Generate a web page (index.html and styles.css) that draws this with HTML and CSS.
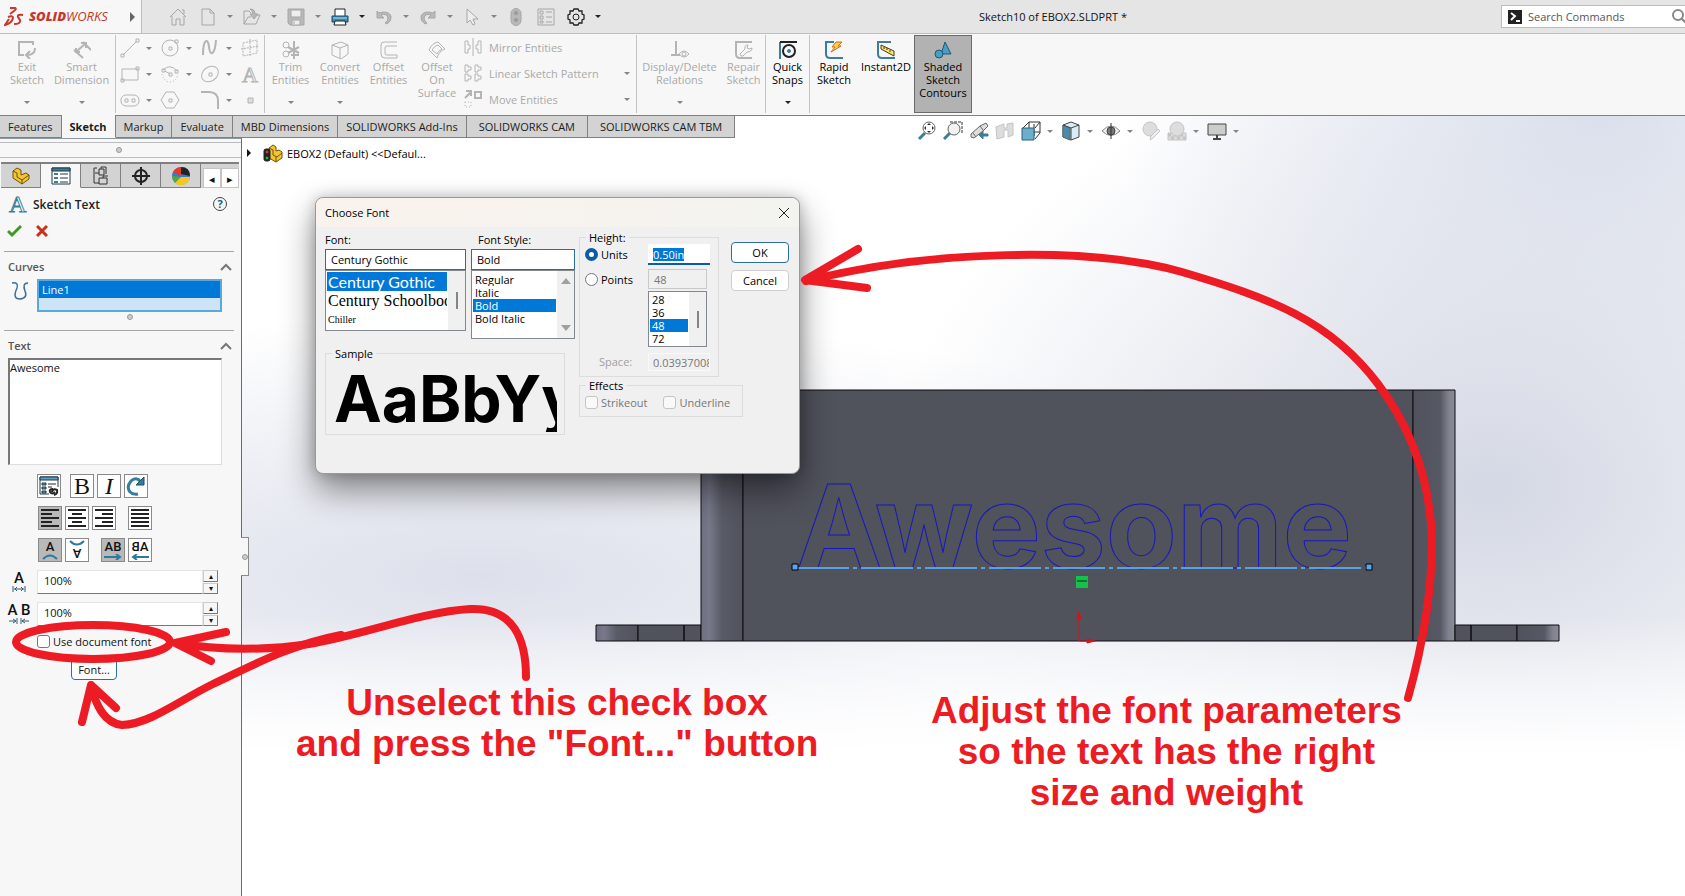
FILE: index.html
```html
<!DOCTYPE html>
<html lang="en">
<head>
    <meta charset="UTF-8">
    <meta name="viewport" content="width=device-width, initial-scale=1.0">
    <title>Sketch10 of EBOX2.SLDPRT *</title>
    <link rel="stylesheet" href="styles.css">
</head>
<body>
    <header class="titlebar">
        <div class="brand">
            <svg class="ds" width="20" height="20" viewBox="0 0 20 20"><path d="M6 1h5q2 1-1 3L6 7M4 10q5-2 5 1-1 5-8 7l4-6M19 8q-6-1-5 2l2 3q1 4-6 4"/></svg>
            <span class="brand-name"><b>SOLID</b>WORKS</span>
            <span class="play"></span>
        </div>
        <div class="quick">
            <button class="tool" aria-label="Home"><svg width="18" height="18" viewBox="0 0 18 18"><path d="M1 9l8-8 8 8M3 8v9h4v-6h4v6h4V8M13 2h2v4"/></svg></button>
            <button class="tool" aria-label="New"><svg width="18" height="18" viewBox="0 0 18 18"><path d="M3 1h8l4 4v12H3zM11 1v4h4"/></svg></button><span class="caret wide"></span>
            <button class="tool" aria-label="Open"><svg width="18" height="18" viewBox="0 0 18 18"><path d="M1 16V3h5l2 2M1 16h12l4-9h-3M1 16l4-7h3" /><path class="grey" d="M7 1q5 0 5 5h3l-4 5-4-5h3q0-3-3-5z"/></svg></button><span class="caret wide"></span>
            <button class="tool" aria-label="Save"><svg width="18" height="18" viewBox="0 0 18 18"><path class="grey" d="M1 1h16v16H3l-2-2z"/><path fill="#eee" d="M4 2h10v7H4zM5 12h8v5H5z"/><path d="M7 13v3"/></svg></button><span class="caret wide"></span>
            <button class="tool" aria-label="Print"><svg width="18" height="18" viewBox="0 0 18 18"><path style="stroke:#222;fill:#fff" d="M4 8V1h10v7"/><path style="stroke:#164b68;fill:#3a8cb4" d="M1 8h16v6H1z"/><path style="stroke:#222;fill:#fff" d="M4 13h10l1 4H3z"/><path style="stroke:#a8dcf4" d="M2 10h14"/></svg></button><span class="caret wide dark"></span>
            <button class="tool" aria-label="Undo"><svg width="18" height="18" viewBox="0 0 18 18"><path class="grey" d="M2 3v7h7L6 7q6-2 7 3 0 3-3 5l2 1q5-3 4-8Q13 2 4 5z"/></svg></button><span class="caret wide"></span>
            <button class="tool" aria-label="Redo"><svg width="18" height="18" viewBox="0 0 18 18"><path class="grey" d="M16 3v7H9l3-3q-6-2-7 3 0 3 3 5l-2 1q-5-3-4-8Q5 2 14 5z"/></svg></button><span class="caret wide"></span>
            <button class="tool" aria-label="Select"><svg width="18" height="18" viewBox="0 0 18 18"><path fill="#eee" d="M4 1v14l3-3 3 5 2-1-2-5h5z"/></svg></button><span class="caret wide"></span>
            <button class="tool" aria-label="Rebuild"><svg width="18" height="18" viewBox="0 0 18 18"><rect class="grey" x="4" y="0.500" width="10" height="17" rx="5"/><circle style="fill:#999" cx="9" cy="5" r="2"/><circle style="fill:#999" cx="9" cy="12" r="2"/></svg></button>
            <button class="tool" aria-label="File Properties"><svg width="18" height="18" viewBox="0 0 18 18"><path d="M1 1h16v16H1zM3 3h3v3H3zM3 8h3v3H3zM3 13h3v2H3zM9 4h6M9 9h6M9 14h6"/></svg></button>
            <button class="tool" aria-label="Options"><svg width="18" height="18" viewBox="0 0 18 18"><path style="stroke:#222;stroke-width:1.300" d="M7 1h4l1 2 3 0 0 3 2 1v4l-2 1 0 3-3 0-1 2H7l-1-2-3 0 0-3-2-1V7l2-1 0-3 3 0z"/><circle style="stroke:#222" cx="9" cy="9" r="3"/></svg></button><span class="caret wide dark"></span>
        </div>
        <h1 class="doc-title">Sketch10 of EBOX2.SLDPRT *</h1>
        <div class="search">
            <span class="prompt"><svg width="14" height="14" viewBox="0 0 14 14"><path d="M3 3l4 3-4 4M8 11h4"/></svg></span>
            <input type="text" aria-label="Search Commands" placeholder="Search Commands">
            <svg class="lens" width="16" height="16" viewBox="0 0 16 16"><circle cx="6" cy="6" r="5"/><path d="M9 9l6 6"/></svg>
        </div>
    </header>

    <nav class="ribbon">
        <div class="group">
            <button class="cmd w54" disabled><svg width="18" height="18" viewBox="0 0 18 18"><path d="M15 4V1H1v13h5M17 7q0 7-8 7M12 10l-4 4 4 4" stroke-width="2"/></svg><span>Exit<br>Sketch</span><i class="caret"></i></button>
            <button class="cmd w61" disabled><svg width="18" height="18" viewBox="0 0 18 18"><path d="M1 9l9 8M10 1l8 8M4 10l8-7M3 7v4h4M8 2h5v5" stroke-width="2"/></svg><span>Smart<br>Dimension</span><i class="caret"></i></button>
        </div>
        <div class="group shapes">
            <button disabled aria-label="Line"><svg width="20" height="20" viewBox="0 0 20 20"><path d="M3 17L17 3M1 16h3v3H1zM16 1h3v3h-3z"/></svg><i class="caret"></i></button>
            <button disabled aria-label="Circle"><svg width="20" height="20" viewBox="0 0 20 20"><circle cx="10" cy="10" r="8"/><path d="M9 9h3v3H9zM15 2h3v3h-3z"/></svg><i class="caret"></i></button>
            <button disabled aria-label="Spline"><svg width="20" height="20" viewBox="0 0 20 20"><path stroke-width="2" d="M3 17C3 1 8-1 9 9s6 8 7-7"/></svg><i class="caret"></i></button>
            <button disabled aria-label="Plane"><svg width="20" height="20" viewBox="0 0 20 20"><path stroke-dasharray="2 1" d="M3 5l14-3v13L3 18zM10 1v18M1 11l18-3"/></svg></button>
            <button disabled aria-label="Rectangle"><svg width="20" height="20" viewBox="0 0 20 20"><path d="M2 5h16v11H2zM1 15h3v3H1zM16 3h3v3h-3z"/></svg><i class="caret"></i></button>
            <button disabled aria-label="Arc"><svg width="20" height="20" viewBox="0 0 20 20"><path d="M3 6q7-7 14 1M2 5h3v3H2zM15 6h3v3h-3zM9 9h3v3H9zM5 7l5 3"/><path stroke-dasharray="1 2" d="M2 10q2 8 8 8t8-8"/></svg><i class="caret"></i></button>
            <button disabled aria-label="Ellipse"><svg width="20" height="20" viewBox="0 0 20 20"><ellipse cx="10" cy="10" rx="9" ry="7" transform="rotate(-35 10 10)"/><path d="M9 9h3v3H9z"/></svg><i class="caret"></i></button>
            <button class="glyph" disabled aria-label="Text">A</button>
            <button disabled aria-label="Slot"><svg width="20" height="20" viewBox="0 0 20 20"><rect x="1" y="5" width="18" height="11" rx="5"/><path d="M5 9h3v3H5zM12 9h3v3h-3z"/></svg><i class="caret"></i></button>
            <button disabled aria-label="Polygon"><svg width="20" height="20" viewBox="0 0 20 20"><path d="M6 2h8l5 8-5 8H6l-5-8zM9 9h3v3H9z"/></svg></button>
            <button disabled aria-label="Fillet"><svg width="20" height="20" viewBox="0 0 20 20"><path d="M1 2h8q9 0 9 9v8" stroke-width="2"/></svg><i class="caret"></i></button>
            <button disabled aria-label="Point"><svg width="20" height="20" viewBox="0 0 20 20"><path d="M8 8h5v5H8z" fill="#ddd"/></svg></button>
        </div>
        <div class="group">
            <button class="cmd w51" disabled><svg width="18" height="18" viewBox="0 0 18 18"><circle cx="4" cy="4" r="3"/><circle cx="4" cy="13" r="3"/><path d="M6 6l11 6M6 12l11-6M12 0v18M9 14h8" stroke-width="2"/></svg><span>Trim<br>Entities</span><i class="caret"></i></button>
            <button class="cmd w48" disabled><svg width="18" height="18" viewBox="0 0 18 18"><path d="M1 4l9-3 7 3v9l-7 5-9-4zM1 4l8 3 8-3M9 7v11"/></svg><span>Convert<br>Entities</span><i class="caret"></i></button>
            <button class="cmd w49" disabled><svg width="18" height="18" viewBox="0 0 18 18"><path d="M17 1H4q-3 0-3 3v9q0 4 4 4h12v-3H7q-2 0-2-2V7q0-2 2-2h10"/></svg><span>Offset<br>Entities</span></button>
            <button class="cmd w48" disabled><svg width="18" height="18" viewBox="0 0 18 18"><path d="M1 9q3-7 9-8l7 7q-6 2-8 9zM4 9q2-4 6-5l4 4q-4 2-5 5z"/></svg><span>Offset<br>On<br>Surface</span></button>
            <div class="lines">
                <button disabled><svg width="18" height="18" viewBox="0 0 18 18"><path d="M9 0v18M1 3h3v4h2v4H4v4H1zM17 3h-3v4h-2v4h2v4h3z"/></svg>Mirror Entities</button>
                <button disabled><svg width="18" height="18" viewBox="0 0 18 18"><path d="M1 1h3v2h3v3H4v2H1zM11 1h3v2h3v3h-3v2h-3zM1 10h3v2h3v3H4v2H1zM11 10h3v2h3v3h-3v2h-3z"/></svg>Linear Sketch Pattern<i class="caret"></i></button>
                <button disabled><svg width="18" height="18" viewBox="0 0 18 18"><path d="M1 8l6-6M2 1h5v5M11 2h6v6h-6z" stroke-width="2"/><path stroke-dasharray="1 2" d="M1 12h6v5H1z"/></svg>Move Entities<i class="caret"></i></button>
            </div>
        </div>
        <div class="group">
            <button class="cmd w85" disabled><svg width="18" height="18" viewBox="0 0 18 18"><path d="M5 0v14M0 14h9" stroke-width="2"/><path d="M8 13q5-6 10 0-5 6-10 0"/><circle cx="13" cy="13" r="2"/></svg><span>Display/Delete<br>Relations</span><i class="caret"></i></button>
            <button class="cmd w43" disabled><svg width="18" height="18" viewBox="0 0 18 18"><path d="M17 1H1v12q0 4 4 4h12" stroke-width="2"/><path d="M6 15l-1-2 5-5q-1-4 3-4l-1 3 2 1 3-1q0 4-5 4l-4 4z"/></svg><span>Repair<br>Sketch</span></button>
        </div>
        <div class="group">
            <button class="cmd w43"><svg width="18" height="18" viewBox="0 0 18 18"><path stroke="#3b7d9c" stroke-width="2" d="M1 18V1"/><path stroke="#222" stroke-width="2" d="M1 1h17"/><circle cx="10" cy="10" r="6" stroke="#222" stroke-width="2"/><circle cx="10" cy="10" r="1.500" fill="#3b7d9c" stroke="#3b7d9c"/></svg><span>Quick<br>Snaps</span><i class="caret dark"></i></button>
        </div>
        <div class="group last">
            <button class="cmd w48"><svg width="18" height="18" viewBox="0 0 18 18"><path stroke="#3b7d9c" stroke-width="2" d="M9 1H1v12q0 4 4 4h13"/><path fill="#ffd23c" stroke="#d26a20" d="M11 1h6l-4 4h3L6 11l4-5H7z"/></svg><span>Rapid<br>Sketch</span></button>
            <button class="cmd w56"><svg width="18" height="18" viewBox="0 0 18 18"><path stroke="#3b7d9c" stroke-width="2" d="M14 1H1v12q0 4 4 4h13"/><path fill="#ffe06a" stroke="#443c20" d="M4 4l13 6v5L4 8zM7 6v2M10 7v2M13 9v2"/></svg><span>Instant2D</span></button>
            <button class="cmd w58 pressed"><svg width="18" height="18" viewBox="0 0 18 18"><path fill="#4d9dc0" stroke="#1c5877" d="M11 1l6 12H7z"/><circle fill="#4d9dc0" stroke="#1c5877" cx="5" cy="13" r="4"/></svg><span>Shaded<br>Sketch<br>Contours</span></button>
        </div>
    </nav>

    <main class="workspace">
        <div class="tab-row">
            <div class="tabs">
                <a href="#features">Features</a>
                <a href="#sketch" class="active">Sketch</a>
                <a href="#markup">Markup</a>
                <a href="#evaluate">Evaluate</a>
                <a href="#mbd">MBD Dimensions</a>
                <a href="#addins">SOLIDWORKS Add-Ins</a>
                <a href="#cam" class="cam">SOLIDWORKS CAM</a>
                <a href="#tbm" class="cam">SOLIDWORKS CAM TBM</a>
            </div>
            <div class="headsup">
                <svg width="20" height="20" viewBox="0 0 20 20"><path d="M8 12l-6 6" stroke="#3b7d9c" stroke-width="3"/><circle cx="12" cy="7" r="6" fill="#fff"/><path fill="#333" d="M12 2l2 2h-4zM12 12l2-2h-4zM7 7l2-2v4zM17 7l-2-2v4z" stroke="none"/></svg>
                <svg width="20" height="20" viewBox="0 0 20 20"><path stroke-dasharray="3 1" stroke="#333" d="M7 1h12v12"/><path d="M7 12l-6 6" stroke="#3b7d9c" stroke-width="3"/><circle cx="11" cy="8" r="6" fill="#f2f2f2"/></svg>
                <svg width="20" height="20" viewBox="0 0 20 20"><path fill="#ddd" d="M2 13l9-8 6-3 2 3-5 5-9 7-3-1zM11 5l3 4M4 12l3 4"/><path stroke="#3b7d9c" fill="#3b7d9c" d="M10 14l4-4v3h5v2h-5v3z"/></svg>
                <svg class="off" width="20" height="20" viewBox="0 0 20 20"><path fill="#ddd" d="M1 6l8-3v4h3V3l6-1v12l-5 2V9H9v7l-7 2z"/></svg>
                <svg width="20" height="20" viewBox="0 0 20 20"><path stroke="#333" d="M2 7l6-6h11v11l-5 6M8 1v6M13 3v12M8 11h11M14 7l5-6"/><path fill="#6aaecb" stroke="#28637f" d="M1 7h12v12H1z"/></svg><i class="caret"></i>
                <svg width="20" height="20" viewBox="0 0 20 20"><path fill="#d8edf5" stroke="#444" d="M2 4l8-3 8 3v12l-8 3-8-3z"/><path fill="#458dac" d="M2 4l7 3v12l-7-3z"/><path stroke="#444" d="M2 4l8 3 8-3M10 7v12"/></svg><i class="caret"></i>
                <svg width="20" height="20" viewBox="0 0 20 20"><path fill="#eee" stroke="#888" d="M1 10q9-10 18 0-9 9-18 0"/><circle cx="10" cy="10" r="4" fill="#777" stroke="#444"/><path stroke="#333" d="M10 2v16"/></svg><i class="caret"></i>
                <svg class="off" width="20" height="20" viewBox="0 0 20 20"><circle cx="9" cy="8" r="7" fill="#ddd"/><path fill="#eee" d="M9 19l1-4 7-7 2 2-7 7z"/></svg>
                <svg class="off" width="20" height="20" viewBox="0 0 20 20"><path fill="#ddd" d="M1 12h18v7H1z"/><path stroke-dasharray="3 3" stroke-width="3" d="M1 14h18M4 17h15"/><circle cx="10" cy="8" r="7" fill="#ddd"/></svg><i class="caret"></i>
                <svg width="20" height="20" viewBox="0 0 20 20"><path fill="#ccc" stroke="#444" d="M1 3h18v11H1z"/><path stroke="#444" stroke-width="2" d="M10 14v4M6 18h8"/></svg><i class="caret"></i>
            </div>
        </div>

        <div class="body-row">
            <aside class="panel">
                <div class="grip"><span class="dot"></span></div>
                <div class="panel-tabs">
                    <button aria-label="FeatureManager"><svg width="20" height="20" viewBox="0 0 20 20"><path fill="#f5c431" stroke="#6d5210" d="M2 5l4-3 4 2v5l5-2 3 2v4l-7 5-9-6z"/><path stroke="#6d5210" d="M2 5l4 2v4l5 3 7-5M11 14v4"/></svg></button>
                    <button class="active" aria-label="PropertyManager"><svg width="20" height="20" viewBox="0 0 20 20"><path stroke="#223944" fill="#fff" d="M1 2h18v16H1z"/><path fill="#3b7d9c" stroke="#223944" d="M1 2h18v3H1z"/><path stroke="#3b7d9c" stroke-width="2" d="M3 8h4M3 12h4M3 16h4"/><path stroke="#223944" d="M9 8h8M9 12h8M9 16h8"/></svg></button>
                    <button aria-label="ConfigurationManager"><svg width="20" height="20" viewBox="0 0 20 20"><path stroke="#333" d="M6 2H3v15h5M4 7h4M8 3h5v6H8zM8 12h8v6H8zM10 3V1h5v7M12 12v-2h5"/></svg></button>
                    <button aria-label="DimXpertManager"><svg width="20" height="20" viewBox="0 0 20 20"><circle cx="10" cy="10" r="6" stroke="#222" stroke-width="2"/><path stroke="#222" stroke-width="2" d="M10 1v18M1 10h18"/></svg></button>
                    <button aria-label="DisplayManager"><svg width="20" height="20" viewBox="0 0 20 20"><g stroke="none"><circle cx="10" cy="10" r="9" fill="#3c78d0"/><path fill="#e33b2d" d="M10 10L2 6q3-5 9-5z"/><path fill="#57a83c" d="M10 11L4 17q-3-3-3-7z"/><path fill="#f3c822" d="M10 11l-6 6q3 3 8 2 6-2 7-8z"/><path fill="#222" d="M10 1q9 0 9 9l-9-2z"/></g></svg></button>
                    <div class="scroller"><button aria-label="Previous tab">◂</button><button aria-label="Next tab">▸</button></div>
                </div>
                <div class="pm-head">
                    <span class="letter">A</span>
                    <h2>Sketch Text</h2>
                    <button class="help" aria-label="Help">?</button>
                </div>
                <div class="confirm">
                    <button aria-label="OK"><svg width="15" height="14" viewBox="0 0 15 14"><path stroke="#3f9a22" stroke-width="3" d="M1 7l4 4 9-9"/></svg></button>
                    <button aria-label="Cancel"><svg width="12" height="12" viewBox="0 0 12 12"><path stroke="#c8301a" stroke-width="3" d="M1 1l10 10M11 1L1 11"/></svg></button>
                </div>
                <section class="curves">
                    <h3>Curves<svg width="12" height="8" viewBox="0 0 12 8"><path d="M1 7l5-5 5 5"/></svg></h3>
                    <div class="selection">
                        <svg width="18" height="20" viewBox="0 0 18 20"><path stroke="#3b6f96" stroke-width="1.500" d="M1 2q7-1 5 5-5 11 3 11 8-1 5-8-3-8 3-8"/></svg>
                        <ul><li>Line1</li></ul>
                    </div>
                    <span class="dot"></span>
                </section>
                <section class="textbox">
                    <h3><label for="sketch-text">Text</label><svg width="12" height="8" viewBox="0 0 12 8"><path d="M1 7l5-5 5 5"/></svg></h3>
                    <textarea id="sketch-text">Awesome</textarea>
                    <div class="format first">
                        <button aria-label="Link to Property"><svg width="20" height="20" viewBox="0 0 20 20"><path stroke="#223944" d="M10 18H1V1h18v10"/><path fill="#5da3c2" stroke="#223944" d="M1 1h18v3H1z"/><path fill="#5da3c2" stroke="#223944" d="M3 7h4v2H3zM3 11h4v2H3zM3 15h4v2H3z"/><path stroke="#222" d="M9 8h8M9 11h4"/><path stroke="#222" stroke-width="2" d="M14 13q-4 0-3 3 2 3 5 0M13 16q1-4 5-2 1 4-3 5"/></svg></button>
                        <span class="spacer"></span>
                        <button class="serif">B</button>
                        <button class="serif"><i>I</i></button>
                        <button aria-label="Rotate"><svg width="20" height="20" viewBox="0 0 20 20"><path stroke="#357f9e" stroke-width="3" d="M15 6q-5-6-10-1-5 6-1 11 3 3 8 2"/><path fill="#357f9e" stroke="#1f4d63" d="M18 1v8h-8z"/></svg></button>
                    </div>
                    <div class="format">
                        <button class="on" aria-label="Left Align"><svg width="20" height="20" viewBox="0 0 20 20"><path class="bars" d="M1 2h18M1 6h11M1 10h18M1 14h11M1 18h18"/></svg></button>
                        <button aria-label="Center Align"><svg width="20" height="20" viewBox="0 0 20 20"><path class="bars" d="M1 2h18M5 6h10M1 10h18M5 14h10M1 18h18"/></svg></button>
                        <button aria-label="Right Align"><svg width="20" height="20" viewBox="0 0 20 20"><path class="bars" d="M1 2h18M8 6h11M1 10h18M8 14h11M1 18h18"/></svg></button>
                        <span class="spacer"></span>
                        <button aria-label="Full Justify"><svg width="20" height="20" viewBox="0 0 20 20"><path class="bars" d="M1 2h18M1 6h18M1 10h18M1 14h18M1 18h18"/></svg></button>
                    </div>
                    <div class="format">
                        <button class="on over">A<svg width="16" height="6" viewBox="0 0 16 6"><path d="M1 5q7-7 14 0"/></svg></button>
                        <button class="over flip-v">A<svg width="16" height="6" viewBox="0 0 16 6"><path d="M1 5q7-7 14 0"/></svg></button>
                        <span class="spacer"></span>
                        <button class="on over">AB<svg width="18" height="6" viewBox="0 0 18 6"><path d="M0 3h16M12 0l4 3-4 3"/></svg></button>
                        <button class="over flip-h">AB<svg width="18" height="6" viewBox="0 0 18 6"><path d="M0 3h16M12 0l4 3-4 3"/></svg></button>
                    </div>
                    <div class="spin">
                        <label for="width-factor">A<svg width="14" height="6" viewBox="0 0 14 6"><path d="M1 0v6M13 0v6M2 3h10M5 1L3 3l2 2M9 1l2 2-2 2"/></svg></label>
                        <input id="width-factor" type="text" value="100%">
                        <div class="steps"><button aria-label="Increase width">▴</button><button aria-label="Decrease width">▾</button></div>
                    </div>
                    <div class="spin">
                        <label for="spacing">A B<svg width="20" height="6" viewBox="0 0 20 6"><path d="M0 3h7M8 0v6M12 0v6M13 3h7M4 1l3 2-3 2M16 1l-3 2 3 2"/></svg></label>
                        <input id="spacing" type="text" value="100%">
                        <div class="steps"><button aria-label="Increase spacing">▴</button><button aria-label="Decrease spacing">▾</button></div>
                    </div>
                    <label class="check"><input type="checkbox">Use document font</label>
                    <button class="font-btn">Font...</button>
                </section>
                <div class="handle"><span class="dot"></span></div>
            </aside>

            <div class="viewport">
                <div class="tree">
                    <span class="play small"></span>
                    <svg width="20" height="20" viewBox="0 0 20 20"><path fill="#f5c431" stroke="#6d5210" d="M6 5l4-3 3 2v4l3-1 3 2v6l-6 4-7-4z"/><path stroke="#6d5210" d="M6 5l4 2v5l4 2 5-4M13 14v5"/><rect x="1" y="6" width="6" height="12" rx="2" fill="#222" stroke="#222"/><circle cx="4" cy="9" r="1" stroke="#e33" fill="#e33"/><circle cx="4" cy="15" r="1" stroke="#3b3" fill="#3b3"/></svg>
                    <span>EBOX2 (Default) &lt;&lt;Defaul...</span>
                </div>
                <svg class="model" viewBox="242 138 1443 758" preserveAspectRatio="xMinYMin meet">
                    <defs>
                        <linearGradient id="left-side"><stop offset="0" stop-color="#6e7080"/><stop offset=".2" stop-color="#77798a"/><stop offset=".5" stop-color="#595b67"/><stop offset="1" stop-color="#50525c"/></linearGradient>
                        <linearGradient id="right-side"><stop offset="0" stop-color="#50525c"/><stop offset=".65" stop-color="#565864"/><stop offset=".85" stop-color="#80828f"/><stop offset="1" stop-color="#8a8c98"/></linearGradient>
                    </defs>
                    <g class="solid">
                        <path fill="url(#left-side)" d="M596 625h42v16h-42z"/>
                        <path d="M638 625h46v16h-46zM684 625h17v16h-17z"/>
                        <path fill="url(#left-side)" d="M701 390h42v251h-42z"/>
                        <path d="M743 390h670v251H743z"/>
                        <path fill="url(#right-side)" d="M1413 390h42v251h-42z"/>
                        <path d="M1455 625h16v16h-16zM1471 625h46v16h-46z"/>
                        <path fill="url(#right-side)" d="M1517 625h42v16h-42z"/>
                    </g>
                    <text class="outline" x="796" y="568">Awesome</text>
                    <path class="construction" d="M797 568h572"/>
                    <path class="point" d="M792 564h6v6h-6zM1366 564h6v6h-6z"/>
                    <path fill="#12c24a" stroke="none" d="M1076 576h12v12h-12z"/>
                    <path stroke="#123" d="M1077 581h10"/>
                    <path class="origin" d="M1079 641v-24M1079 641h10M1079 611l-2 8h4zM1095 641l-8-2v4z"/>
                </svg>
                <p class="note note-left">Unselect this check box<br>and press the "Font..." button</p>
                <p class="note note-right">Adjust the font parameters<br>so the text has the right<br>size and weight</p>
            </div>
        </div>
    </main>

    <div class="dialog" role="dialog" aria-labelledby="dlg-title">
        <div class="dlg-title">
            <h2 id="dlg-title">Choose Font</h2>
            <button aria-label="Close"><svg width="12" height="12" viewBox="0 0 12 12"><path d="M1 1l10 10M11 1L1 11"/></svg></button>
        </div>
        <div class="dlg-body">
            <div class="dlg-left">
                <div class="pickers">
                    <div class="picker">
                        <label for="font-name">Font:</label>
                        <input id="font-name" type="text" value="Century Gothic">
                        <div class="list fonts">
                            <ul><li class="sel gothic">Century Gothic</li><li class="school">Century Schoolbook</li><li class="chiller">Chiller</li></ul>
                            <div class="bar"><span class="thumb"></span></div>
                        </div>
                    </div>
                    <div class="picker style-picker">
                        <label for="font-style">Font Style:</label>
                        <input id="font-style" type="text" value="Bold">
                        <div class="list styles">
                            <ul><li>Regular</li><li>Italic</li><li class="sel">Bold</li><li>Bold Italic</li></ul>
                            <div class="bar arrows"><span class="up"></span><span class="down"></span></div>
                        </div>
                    </div>
                </div>
                <fieldset class="sample"><legend>Sample</legend><div>AaBbYy</div></fieldset>
            </div>
            <div class="dlg-right">
                <div class="dlg-top">
                    <fieldset class="height">
                        <legend>Height:</legend>
                        <label><input type="radio" name="unit" checked>Units</label>
                        <div class="units"><input type="text" aria-label="Units" value="0.50in" size="6"><mark>0.50in</mark></div>
                        <label><input type="radio" name="unit">Points</label>
                        <input class="points" type="text" aria-label="Points" value="48" disabled>
                        <div class="list sizes">
                            <ul><li>28</li><li>36</li><li class="sel">48</li><li>72</li></ul>
                            <div class="bar"><span class="thumb"></span></div>
                        </div>
                        <label class="space-label" for="space">Space:</label>
                        <input class="space" id="space" type="text" value="0.03937008" disabled>
                    </fieldset>
                    <div class="dlg-buttons">
                        <button class="default">OK</button>
                        <button>Cancel</button>
                    </div>
                </div>
                <fieldset class="effects">
                    <legend>Effects</legend>
                    <label><input type="checkbox" disabled>Strikeout</label>
                    <label><input type="checkbox" disabled>Underline</label>
                </fieldset>
            </div>
        </div>
    </div>

    <svg class="markup" viewBox="0 0 1685 896" preserveAspectRatio="xMinYMin meet">
        <ellipse cx="93" cy="642" rx="77" ry="17"/>
        <path d="M526 677C526 640 514 607 470 609C420 612 360 636 309 644C270 650 220 651 176 643M226 632L175 643L211 661"/>
        <path d="M341 635C290 645 255 664 213 684C180 700 150 724 122 725C104 723 96 705 91 686M82 722L91 685L116 708"/>
        <path d="M1408 698C1420 655 1432 600 1432 540C1430 475 1408 424 1378 384C1330 320 1270 298 1182 272C1090 246 930 250 806 281M858 249L805 280L867 288"/>
    </svg>
</body>
</html>
```

FILE: styles.css
```css
* {
    box-sizing: border-box;
}

body {
    margin: 0;
    min-height: 100vh;
    display: flex;
    flex-direction: column;
    position: relative;
    overflow: hidden;
    font-family: "Open Sans", "Noto Sans", sans-serif;
    font-size: 11px;
    line-height: 13px;
    color: #111;
    background-color: #fff;
}

button, input, textarea {
    font: inherit;
    color: inherit;
    margin: 0;
    padding: 0;
    border: none;
    background: none;
}

h1, h2, h3, p, ul, fieldset {
    margin: 0;
    padding: 0;
    font-size: inherit;
    font-weight: normal;
}

ul {
    list-style: none;
}

svg {
    fill: none;
    stroke: #b4b4b4;
    flex: none;
    display: block;
}

/* little drop-down triangle */
.caret {
    width: 0;
    height: 0;
    border: 3px solid transparent;
    border-top: 3px solid #858585;
    border-bottom: none;
}

.caret.dark {
    border-top-color: #222;
}

.caret.wide {
    margin: 0 4px;
}

.dot {
    width: 6px;
    height: 6px;
    border: 1px solid #999;
    border-radius: 50%;
    background-color: #ccc;
}

.play {
    border: 5px solid transparent;
    border-left: 5px solid #666;
    border-right: none;
}

.play.small {
    border-width: 4px;
    border-right: none;
    border-left-color: #111;
}

/* title bar */
.titlebar {
    display: flex;
    align-items: center;
    height: 34px;
    background-color: #e5e5e5;
    border-bottom: 1px solid #bdbdbd;
}

.brand {
    display: flex;
    align-items: center;
    width: 142px;
    height: 33px;
    padding: 0 6px 0 4px;
    background-color: #f7f7f7;
    border-right: 1px solid #bdbdbd;
    color: #c8372c;
}

.ds {
    stroke: #c8372c;
    stroke-width: 2;
}

.brand-name {
    flex: 1;
    padding-left: 5px;
    font-family: "Open Sans", sans-serif;
    font-size: 13px;
    font-style: italic;
}

.brand-name b {
    font-weight: 800;
}

.quick {
    display: flex;
    align-items: center;
    padding-left: 21px;
}

.tool {
    width: 30px;
    display: flex;
    justify-content: center;
}

.tool svg {
    stroke: #a6a6a6;
}

.grey {
    fill: #b9b9b9;
}

.doc-title {
    flex: 1;
    text-align: center;
}

.search {
    display: flex;
    align-items: center;
    width: 184px;
    height: 23px;
    padding-left: 6px;
    background-color: #fff;
    border: 1px solid #bdbdbd;
    border-right: none;
    overflow: hidden;
}

.search input {
    flex: 1;
    min-width: 0;
    padding-left: 6px;
}

.search input::placeholder {
    color: #555;
    opacity: 1;
}

.prompt {
    background-color: #222;
}

.prompt svg {
    stroke: #fff;
    stroke-width: 2;
}

.lens {
    stroke: #888;
    stroke-width: 2;
    margin-right: -3px;
}

/* ribbon */
.ribbon {
    display: flex;
    height: 82px;
    padding-top: 1px;
    background-color: #f7f7f7;
    border-bottom: 1px solid #808080;
}

.group {
    display: flex;
    height: 78px;
    border-right: 1px solid #c4c4c4;
}

.group.last {
    border: none;
}

.cmd {
    display: flex;
    flex-direction: column;
    align-items: center;
    height: 78px;
    padding-top: 6px;
    color: #000;
    white-space: nowrap;
}

.cmd span {
    padding-top: 1px;
}

.cmd .caret {
    margin-top: auto;
    margin-bottom: 9px;
}

.ribbon button:disabled {
    color: #a9a9a9;
}

.w43 { width: 43px; }
.w48 { width: 48px; }
.w49 { width: 49px; }
.w51 { width: 51px; }
.w54 { width: 54px; }
.w56 { width: 56px; }
.w58 { width: 58px; }
.w85 { width: 85px; }

.w61 {
    width: 61px;
    padding-right: 6px;
}

.pressed {
    background-color: #b2b2b2;
    border: 1px solid #6b6b6b;
    padding-top: 5px;
}

.shapes {
    display: grid;
    grid-template-columns: 40px 40px 40px 28px;
    grid-template-rows: 26px 26px 26px;
}

.shapes button {
    display: flex;
    align-items: center;
    padding-left: 4px;
}

.shapes .caret {
    margin-left: 6px;
}

.shapes .glyph {
    padding-left: 6px;
    font-family: "Liberation Serif", serif;
    font-size: 22px;
    color: #f7f7f7;
    -webkit-text-stroke: 1px #b4b4b4;
}

.shapes .glyph:disabled {
    color: #f7f7f7;
}

.lines {
    width: 175px;
    display: flex;
    flex-direction: column;
    margin-top: -1px;
}

.lines button {
    display: flex;
    align-items: center;
    height: 26px;
    padding: 0 6px 0 3px;
    white-space: nowrap;
}

.lines svg {
    margin-right: 7px;
}

.lines .caret {
    margin-left: auto;
}

/* workspace */
.workspace {
    flex: 1;
    display: flex;
    flex-direction: column;
    background:
        linear-gradient(to bottom, rgba(255, 255, 255, 0) 64%, #fff 82%),
        radial-gradient(ellipse 600px 440px at 1490px 370px, #d4d8e4, rgba(212, 216, 228, 0)),
        radial-gradient(ellipse 480px 320px at 1600px 0, #dce1ed, rgba(220, 225, 237, 0)),
        radial-gradient(ellipse 900px 260px at 480px 460px, #dde0eb, rgba(221, 224, 235, 0)),
        #fff;
}

.tab-row {
    display: flex;
    height: 22px;
}

.tabs {
    display: flex;
    height: 22px;
}

.tabs a {
    padding: 4px 8px;
    border: 1px solid #808080;
    border-left: none;
    border-top: none;
    background-color: #d3d3d3;
    color: #1c1c1c;
    text-decoration: none;
    white-space: nowrap;
}

.tabs .active {
    margin-top: -1px;
    padding-top: 5px;
    background-color: #f7f7f7;
    border-bottom-color: #f7f7f7;
    font-weight: bold;
}

.tabs .cam {
    padding: 4px 12px;
}

.headsup {
    display: flex;
    align-items: center;
    gap: 6px;
    height: 30px;
    margin-left: 182px;
}

.headsup svg {
    stroke: #666;
}

.headsup .off {
    stroke: #c4c4c4;
}

.headsup .caret {
    margin-right: 2px;
}

.body-row {
    flex: 1;
    display: flex;
}

.panel {
    position: relative;
    width: 242px;
    background-color: #f7f7f7;
    border-right: 1px solid #6b6b6b;
    border-top: 1px solid #8c9aa0;
    padding-top: 3px;
}

.grip {
    display: flex;
    align-items: center;
    justify-content: center;
    height: 16px;
    padding-right: 3px;
    border-top: 1px solid #bdbdbd;
    border-bottom: 1px solid #bdbdbd;
}

.panel-tabs {
    display: flex;
    height: 26px;
    margin: 4px 2px 0 1px;
    border-top: 2px solid #808080;
}

.panel-tabs > button {
    display: flex;
    align-items: center;
    justify-content: center;
    width: 40px;
    background-color: #d3d3d3;
    border-right: 1px solid #808080;
    border-bottom: 1px solid #808080;
}

.panel-tabs > .active {
    background-color: #f7f7f7;
    border-bottom-color: #f7f7f7;
}

.scroller {
    display: flex;
    flex: 1;
    padding: 4px 0 0 2px;
    background-color: #d3d3d3;
}

.scroller button {
    flex: 1;
    background-color: #fff;
    border: 1px solid #c4c4c4;
}

.pm-head {
    display: flex;
    align-items: center;
    height: 32px;
    padding: 0 14px 0 9px;
}

.letter {
    width: 24px;
    font-family: "Liberation Serif", serif;
    font-size: 24px;
    line-height: 24px;
    color: #fff;
    -webkit-text-stroke: 1px #3b7d9c;
}

.pm-head h2 {
    flex: 1;
    font-size: 12px;
    font-weight: 600;
    color: #222;
}

.help {
    width: 14px;
    height: 14px;
    border: 1px solid #444;
    border-radius: 50%;
    color: #205a88;
    font-weight: bold;
    line-height: 12px;
}

.confirm {
    display: flex;
    align-items: center;
    gap: 14px;
    height: 22px;
    padding-left: 7px;
}

.panel section {
    margin: 9px 7px 0 4px;
    border-top: 1px solid #a6a6a6;
}

.curves {
    height: 69px;
}

.panel .textbox {
    margin-top: 10px;
}

.panel h3 {
    display: flex;
    align-items: center;
    justify-content: space-between;
    height: 27px;
    padding: 2px 2px 0 4px;
    font-weight: 600;
    color: #555;
}

.panel h3 svg {
    stroke: #777;
    stroke-width: 2;
}

.selection {
    display: flex;
    gap: 8px;
    padding: 0 12px 0 7px;
}

.selection svg {
    margin-top: 2px;
}

.selection ul {
    flex: 1;
    height: 33px;
    border: 2px solid #5aa9dc;
    background-color: #cde4f7;
}

.selection li {
    height: 17px;
    padding: 2px 3px;
    background-color: #0078d7;
    color: #fff;
}

.curves .dot {
    display: block;
    margin: 2px 0 0 123px;
}

textarea {
    display: block;
    width: 214px;
    height: 107px;
    margin-left: 4px;
    padding: 1px 0;
    background-color: #fff;
    border: 1px solid #ddd;
    border-top: 2px solid #777;
    border-left: 2px solid #777;
    resize: none;
}

.format {
    display: flex;
    gap: 3px;
    height: 24px;
    margin: 8px 0 0 34px;
}

.format.first {
    margin: 9px 0 0 33px;
}

.format button {
    display: flex;
    align-items: center;
    justify-content: center;
    width: 24px;
    height: 24px;
    background-color: #fff;
    border: 1px solid #8a8a8a;
}

.format .on {
    background-color: #b9b9b9;
}

.format .serif {
    font-family: "Liberation Serif", serif;
    font-size: 24px;
}

.format .over {
    flex-direction: column;
    font-family: Roboto, sans-serif;
    font-size: 13px;
    font-weight: 500;
    line-height: 14px;
}

.over svg {
    stroke: #2f7a9c;
    stroke-width: 2;
}

.flip-v {
    transform: scaleY(-1);
}

.flip-h {
    transform: scaleX(-1);
}

.spacer {
    width: 6px;
}

.first .spacer {
    width: 3px;
}

.bars {
    stroke: #222;
    stroke-width: 2;
}

.spin {
    display: flex;
    height: 24px;
    margin: 8px 16px 0 4px;
}

.spin label {
    display: flex;
    flex-direction: column;
    align-items: center;
    width: 29px;
    padding: 2px 7px 0 0;
    font-family: Roboto, sans-serif;
    font-size: 15px;
    font-weight: 500;
    white-space: nowrap;
}

.spin label svg {
    margin-top: 1px;
    stroke: #2f5f7a;
}

.spin input {
    flex: 1;
    min-width: 0;
    padding: 0 6px 3px;
    background-color: #fff;
    border: 1px solid #e5e5e5;
    border-bottom: 1px solid #777;
}

.steps {
    width: 15px;
    display: flex;
    flex-direction: column;
    gap: 1px;
}

.steps button {
    flex: 1;
    font-size: 8px;
    line-height: 8px;
    border: 1px solid #ccc;
    border-right-color: #777;
    border-bottom-color: #777;
}

.check {
    display: flex;
    align-items: center;
    gap: 3px;
    height: 13px;
    margin: 9px 0 0 33px;
}

input[type="checkbox"], input[type="radio"] {
    appearance: none;
    width: 13px;
    height: 13px;
    background-color: #fff;
    border: 1px solid #777;
    border-radius: 3px;
}

input[type="radio"] {
    border-radius: 50%;
}

input[type="radio"]:checked {
    border: 4px solid #0a5ca8;
}

input[type="checkbox"]:disabled {
    border-color: #c4c4c4;
    background-color: #f9f9f9;
}

.font-btn {
    width: 46px;
    height: 22px;
    margin: 10px 0 0 67px;
    background-color: #fff;
    border: 1px solid #2a6fa0;
    border-radius: 4px;
}

.handle {
    position: absolute;
    top: 398px;
    right: -8px;
    display: flex;
    align-items: center;
    justify-content: flex-end;
    width: 8px;
    height: 39px;
    background-color: #f7f7f7;
    border: 1px solid #8a8a8a;
    border-left: none;
}

/* graphics area */
.viewport {
    flex: 1;
    position: relative;
}

.tree {
    position: absolute;
    z-index: 1;
    top: 5px;
    left: 5px;
    display: flex;
    align-items: center;
    color: #000;
}

.tree svg {
    margin: 0 4px 0 12px;
}

.model {
    position: absolute;
    width: 100%;
    height: 100%;
}

.solid {
    fill: #50525c;
    stroke: #0c0c10;
}

.outline {
    font-family: Inter, sans-serif;
    font-size: 116px;
    font-weight: bold;
    stroke: #1616c0;
}

.construction {
    stroke: #5a9fe0;
    stroke-width: 2;
    stroke-dasharray: 52 4 4 4;
}

.point {
    fill: #5aa6ee;
    stroke: #000;
}

.origin {
    stroke: #d4141c;
    fill: #d4141c;
}

.note {
    position: absolute;
    font-family: "Liberation Sans", Arial, sans-serif;
    font-size: 37px;
    font-weight: bold;
    line-height: 41px;
    text-align: center;
    color: #ed1c24;
    white-space: nowrap;
}

.note-left {
    top: 544px;
    left: 54px;
}

.note-right {
    top: 552px;
    left: 689px;
}

/* font dialog */
.dialog {
    position: absolute;
    top: 197px;
    left: 315px;
    width: 485px;
    height: 277px;
    background-color: #f0f0f0;
    border: 1px solid #999;
    border-radius: 8px;
    box-shadow: 0 16px 34px rgba(0, 0, 0, 0.45), 0 0 14px rgba(0, 0, 0, 0.2);
    color: #000;
}

.dlg-title {
    display: flex;
    align-items: center;
    justify-content: space-between;
    height: 29px;
    padding: 0 9px;
    border-radius: 8px 8px 0 0;
    background: linear-gradient(to right, #faf2ec, #f3f3f0);
}

.dlg-title svg {
    stroke: #222;
}

.dlg-body {
    display: flex;
    gap: 4px;
    padding: 4px 9px;
}

.dlg-left {
    width: 250px;
}

.pickers {
    display: flex;
    gap: 5px;
    height: 107px;
}

.picker {
    width: 141px;
}

.style-picker {
    width: 104px;
}

.picker label {
    display: block;
    height: 18px;
    padding-top: 2px;
}

.style-picker label {
    padding-left: 7px;
}

.picker input {
    width: 100%;
    height: 21px;
    padding: 0 5px 1px;
    background-color: #fff;
    border: 1px solid #2a6fa0;
}

.list {
    display: flex;
    background-color: #fff;
    border: 1px solid #828790;
}

.list ul {
    flex: 1;
    min-width: 0;
    padding: 1px;
    overflow: hidden;
    white-space: nowrap;
}

.list li {
    height: 13px;
    padding-left: 2px;
    overflow: hidden;
}

.list .sel {
    background-color: #0078d7;
    color: #fff;
}

.bar {
    width: 17px;
    display: flex;
    justify-content: center;
    align-items: center;
    background-color: #f0f0f0;
}

.thumb {
    width: 2px;
    height: 17px;
    background-color: #858585;
}

.arrows {
    flex-direction: column;
    justify-content: space-between;
    padding: 7px 0;
}

.up, .down {
    border: 5px solid transparent;
    border-top: none;
    border-bottom: 6px solid #a0a0a0;
}

.down {
    border-bottom: none;
    border-top: 6px solid #a0a0a0;
}

.fonts {
    height: 61px;
}

.fonts li {
    height: 19px;
    padding-left: 1px;
    line-height: 19px;
}

.list .gothic {
    font-family: Lato, sans-serif;
    font-size: 16px;
}

.list .school {
    font-family: "Liberation Serif", serif;
    font-size: 16px;
}

.list .chiller {
    font-family: "Liberation Serif", serif;
    font-size: 10px;
}

.styles {
    height: 69px;
}

.styles ul {
    padding-top: 2px;
}

fieldset {
    border: 1px solid #dcdcdc;
    min-width: 0;
}

legend {
    margin-left: 1px;
    padding: 0 3px;
}

.sample {
    width: 240px;
    height: 88px;
    margin-top: 9px;
    padding: 0 7px 0 8px;
}

.sample legend {
    margin-left: -2px;
}

.sample div {
    height: 72px;
    overflow: hidden;
    font-family: Inter, sans-serif;
    font-size: 64px;
    font-weight: bold;
    line-height: 78px;
}

.dlg-top {
    display: flex;
    gap: 12px;
}

.height {
    display: grid;
    grid-template-columns: 63px 62px;
    grid-template-rows: 25px 22px 62px 18px;
    width: 140px;
    height: 146px;
    padding-left: 5px;
    align-items: start;
}

.height label, .effects label {
    display: flex;
    align-items: center;
    gap: 3px;
    padding-top: 4px;
}

.units {
    position: relative;
    height: 21px;
    background-color: #fff;
    border-bottom: 2px solid #0a5ca8;
}

.units input {
    width: 60px;
    padding: 4px 5px 3px;
}

.units mark {
    position: absolute;
    top: 4px;
    left: 5px;
    background-color: #0078d7;
    color: #fff;
}

.points, .space {
    width: 59px;
    height: 20px;
    padding: 0 5px;
    border: 1px solid #c8c8c8;
    color: #777;
}

.space {
    width: 62px;
    height: 18px;
    padding: 0 0 0 4px;
    border-color: #f9f9f9;
}

.sizes {
    grid-column: 2;
    width: 59px;
    height: 56px;
}

.height .space-label {
    padding-left: 14px;
    padding-top: 2px;
    color: #a0a0a0;
}

.dlg-buttons {
    display: flex;
    flex-direction: column;
    gap: 7px;
    padding-top: 11px;
}

.dlg-buttons button {
    width: 58px;
    height: 21px;
    background-color: #fff;
    border: 1px solid #cfcfcf;
    border-radius: 4px;
}

.dlg-buttons .default {
    border-color: #2a6fa0;
}

.effects {
    display: flex;
    gap: 16px;
    width: 164px;
    height: 38px;
    margin-top: 2px;
    padding-left: 5px;
    align-items: start;
    color: #777;
}

.effects legend {
    color: #000;
}

/* red arrows drawn over the window */
.markup {
    position: absolute;
    top: 0;
    left: 0;
    width: 100%;
    height: 100%;
    stroke: #ed1c24;
    stroke-width: 8;
    stroke-linecap: round;
    stroke-linejoin: round;
    pointer-events: none;
}
```
